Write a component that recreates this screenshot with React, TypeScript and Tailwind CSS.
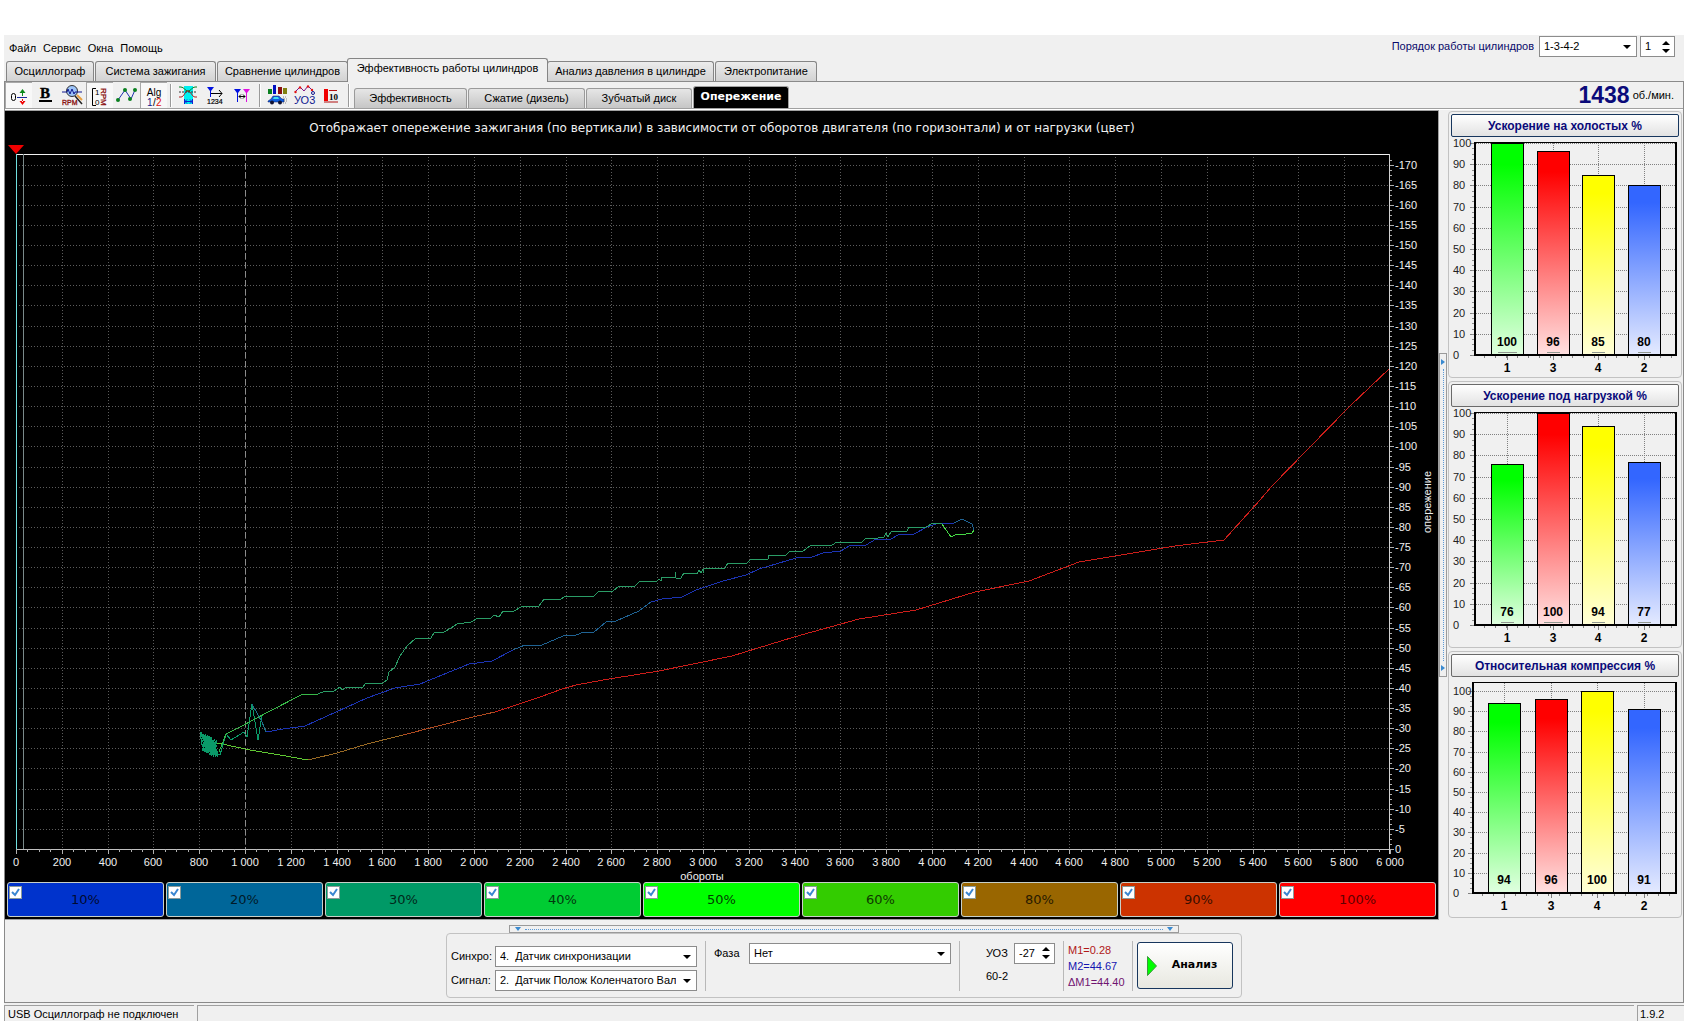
import React from "react";

type Pt = [number, number];
type Line = { color: string; pts: Pt[] };

const ui = "font-['Liberation_Sans',Arial,sans-serif]";
const wide = "font-['DejaVu_Sans',Verdana,sans-serif]";

const range = (n: number) => Array.from({ length: n }, (_, i) => i);
const toPoints = (pts: Pt[]) => pts.map((p) => p.join(",")).join(" ");

/* ---------- toolbar icons ---------- */

const iconOffset = () => (
  <svg viewBox="0 0 22 22" className="size-[22px]">
    <rect x="3.5" y="8.5" width="4" height="7" rx="2" fill="none" stroke="#000" />
    <path d="M9 12.500h10" stroke="#1a2a9a" />
    <path d="M14.500 4l3 4h-6zM14 8h1v3h-1z" fill="#0a8a1a" />
    <path d="M14.500 20l3-4h-6zM14 14h1v3h-1z" fill="#f00000" />
  </svg>
);
const iconBold = () => (
  <svg viewBox="0 0 22 22" className="size-[22px]">
    <text x="10" y="14" textAnchor="middle" fontSize="15" fontWeight="700" stroke="#000" strokeWidth="0.4" fontFamily="Liberation Serif, serif">B</text>
    <path d="M4 16h13v2H4z" fill="#000" />
  </svg>
);
const iconZoomRpm = () => (
  <svg viewBox="0 0 22 22" className="size-[22px]">
    <circle cx="10" cy="7" r="5.500" fill="#9cc4f8" stroke="#333" />
    <path d="M0 8h5l1-3 2 5 2-5 2 5 1-2h7" stroke="#101a90" fill="none" />
    <path d="M15 11l5 5" stroke="#e8a040" strokeWidth="2" />
    <path d="M13 12l7 8" stroke="#222" strokeWidth="1.500" />
    <text x="0" y="21" fontSize="7" fontFamily="Liberation Sans" fill="#8a1010" stroke="#8a1010" strokeWidth="0.3">RPM</text>
  </svg>
);
const iconScale = () => (
  <svg viewBox="0 0 22 22" className="size-[22px]">
    <path d="M7 3.500H3.500v17H7" fill="none" stroke="#000" />
    <text x="6" y="10" fontSize="8" fontFamily="Liberation Sans">1</text>
    <text x="6" y="20" fontSize="8" fontFamily="Liberation Sans">0</text>
    <text transform="translate(12 3) rotate(90)" fontSize="8" fontFamily="Liberation Sans" fill="#8a1010" stroke="#8a1010" strokeWidth="0.3">RPM</text>
  </svg>
);
const iconPoints = () => (
  <svg viewBox="0 0 22 22" className="size-[22px]">
    <path d="M2 16L9 6l6 9 4-9" fill="none" stroke="#2030b0" />
    <g fill="#0a8020">
      <circle cx="2" cy="16" r="2" />
      <circle cx="9" cy="6" r="2" />
      <circle cx="14" cy="15" r="2" />
      <circle cx="19" cy="6" r="2" />
    </g>
  </svg>
);
const iconAlg = () => (
  <svg viewBox="0 0 22 22" className="size-[22px]">
    <text x="11" y="11" textAnchor="middle" fontSize="10" fontFamily="Liberation Sans">Alg</text>
    <text x="4" y="21" fontSize="10" fontFamily="Liberation Sans" fill="#101a90">1</text>
    <text x="10" y="21" fontSize="10" fontFamily="Liberation Sans">/</text>
    <text x="13" y="21" fontSize="10" fontFamily="Liberation Sans" fill="#e01010">2</text>
  </svg>
);
const iconWindow = () => (
  <svg viewBox="0 0 22 22" className="size-[22px]">
    <path d="M6 2h9v18H6z" fill="#00f0f0" />
    <path d="M1 3h2c3 0 4 4 7 4s4-4 7-4h2" fill="none" stroke="#0a8020" />
    <path d="M1 13h2c3 0 4-6 7-6s4 6 7 6h2" fill="none" stroke="#b02020" />
    <path d="M1 8h18" stroke="#333" strokeDasharray="2 1" />
    <path d="M6.500 15v5M14.500 15v5M7 17.500h7M9 15.500l-2 2 2 2M12 15.500l2 2-2 2" fill="none" stroke="#1020d0" />
  </svg>
);
const iconOrder = () => (
  <svg viewBox="0 0 22 22" className="size-[22px]">
    <path d="M2 3h7L6 7v6H5V7z" fill="#0010e0" />
    <path d="M6 9.500h11M14 6l3 3.500-3 3.500" fill="none" stroke="#000" />
    <text x="2" y="20" fontSize="7" fontFamily="Liberation Sans" stroke="#000" strokeWidth="0.2">1234</text>
  </svg>
);
const iconMarkers = () => (
  <svg viewBox="0 0 22 22" className="size-[22px]">
    <path d="M2 5h7L6 9v9H5V9z" fill="#0010e0" />
    <path d="M11 5h7l-3 4v9h-1V9z" fill="#e010e0" />
    <path d="M7 12.500h6M9 10.500l-2 2 2 2M11 10.500l2 2-2 2" fill="none" stroke="#000" />
  </svg>
);
const iconCar = () => (
  <svg viewBox="0 0 22 22" className="size-[22px]">
    <path d="M1 5h4v5H1z" fill="#0a8020" />
    <path d="M6 1h3v9H6z" fill="#0010c0" />
    <path d="M11 3h4v7h-4z" fill="#8a1010" />
    <path d="M16 4h4v6h-4z" fill="#808010" />
    <path d="M1 17l3-2 2-3h6l3 3h2v3H1z" fill="#1060e0" stroke="#101a60" strokeWidth="0.500" />
    <path d="M6 15l1-2h4l1 2z" fill="#40e0f0" />
    <circle cx="5" cy="18.500" r="2" fill="#101030" />
    <circle cx="13" cy="18.500" r="2" fill="#101030" />
    <path d="M16 13h4M17 15h4M17 17h3M16 19h4" stroke="#888" strokeDasharray="1 1" />
  </svg>
);
const iconUoz = () => (
  <svg viewBox="0 0 22 22" className="size-[22px]">
    <path d="M1 8l5-5 4 4 4-5 4 4" fill="none" stroke="#801080" />
    <g fill="#e01010">
      <circle cx="1.500" cy="8" r="1.200" />
      <circle cx="6" cy="3.500" r="1.200" />
      <circle cx="14" cy="2.500" r="1.200" />
      <circle cx="18" cy="6" r="1.200" />
    </g>
    <text x="0" y="20" fontSize="11" fontFamily="Liberation Sans" fill="#101a90">УО3</text>
    <circle cx="19" cy="9" r="1.500" fill="none" stroke="#101a90" />
  </svg>
);
const iconTen = () => (
  <svg viewBox="0 0 22 22" className="size-[22px]">
    <path d="M3 5h4v12H3z" fill="#f00000" />
    <path d="M8 6.500h8M3 18h14" stroke="#b01010" />
    <text x="8" y="16" fontSize="9" fontWeight="700" fontFamily="Liberation Serif, serif">10</text>
  </svg>
);

type Tool = { label: string; icon: () => React.JSX.Element; pressed?: boolean };
const toolGroups: Tool[][] = [
  [
    { label: "Смещение", icon: iconOffset, pressed: true },
    { label: "Жирные линии", icon: iconBold },
    { label: "Масштаб RPM", icon: iconZoomRpm },
    { label: "Шкала RPM", icon: iconScale, pressed: true },
    { label: "Точки", icon: iconPoints },
    { label: "Алгоритм", icon: iconAlg, pressed: true },
  ],
  [
    { label: "Окно", icon: iconWindow },
    { label: "Порядок", icon: iconOrder },
    { label: "Маркеры", icon: iconMarkers },
  ],
  [
    { label: "Автомобиль", icon: iconCar },
    { label: "УОЗ", icon: iconUoz },
    { label: "Десять", icon: iconTen },
  ],
];

/* ---------- main chart ---------- */

const X0 = 16;
const X1 = 1390;
const Y0 = 849;
const YTOP = 154;
const px = (rpm: number) => Math.round(X0 + (rpm * (X1 - X0)) / 6000);
const py = (deg: number) => Math.round(Y0 - deg * 4.026);

const idleNoise: Pt[] = range(90).map((i) => {
  const x = 201 + ((i * 7) % 18);
  const mid = 741 + (x - 201) * 0.5;
  const amp = 3 + ((i * 5) % 7);
  return [x, Math.round(mid + (i % 2 ? amp : -amp))];
});

const lines: Line[] = [
  { color: "#5fc832", pts: [[210, 742], [222, 744], [250, 750], [280, 755], [308, 760]] },
  { color: "#9a6a24", pts: [[308, 760], [337, 753], [367, 744], [403, 735]] },
  { color: "#b04a20", pts: [[403, 735], [473, 717], [495, 712]] },
  {
    color: "#cc1e1a",
    pts: [
      [495, 712], [540, 697], [562, 689], [576, 685], [609, 679], [659, 671], [732, 656], [794, 637], [859, 619],
      [916, 610], [975, 592], [1029, 581], [1079, 562], [1127, 554], [1175, 546], [1224, 540], [1260, 500],
      [1271, 487], [1308, 449], [1350, 406], [1389, 369],
    ],
  },
  { color: "#0a9a68", pts: [[200, 732], [202, 745], ...idleNoise, [220, 755], [226, 734], [231, 740], [244, 732], [247, 737], [252, 704], [258, 740], [262, 715]] },
  { color: "#1d7088", pts: [[252, 704], [258, 715], [262, 722], [266, 732]] },
  {
    color: "#1c34b4",
    pts: [[266, 732], [283, 729], [305, 726], [367, 698], [395, 688], [420, 684], [469, 664], [492, 661], [513, 650]],
  },
  {
    color: "#1f6394",
    pts: [
      [513, 650], [525, 645], [542, 645], [563, 636], [576, 635], [584, 632], [594, 632], [606, 622], [616, 621],
      [639, 611], [651, 602],
    ],
  },
  {
    color: "#1c34b4",
    pts: [
      [651, 602], [662, 599], [682, 597], [696, 590], [723, 581], [746, 575], [759, 569], [796, 558], [812, 557],
      [823, 553], [841, 551], [849, 546], [866, 545], [876, 539], [891, 539], [900, 534], [914, 534], [927, 527],
      [939, 523], [954, 523],
    ],
  },
  { color: "#1f6394", pts: [[954, 523], [962, 519], [972, 524], [974, 530]] },
  { color: "#46d846", pts: [[974, 530], [972, 533], [966, 534], [955, 535], [951, 537], [942, 524]] },
  { color: "#38b848", pts: [[219, 752], [226, 734], [240, 727], [268, 712], [303, 694], [318, 694]] },
  {
    color: "#2a9c66",
    pts: [
      [318, 694], [325, 691], [334, 691], [340, 687], [342, 690], [347, 687], [363, 687], [366, 683], [383, 683],
      [387, 680], [389, 672], [395, 667], [400, 656], [407, 646], [415, 639], [431, 638], [434, 633], [444, 632],
      [451, 628], [457, 624], [471, 622], [478, 618], [491, 618], [494, 615], [499, 617], [503, 611], [514, 611],
      [523, 606], [539, 606], [544, 599], [559, 600], [566, 596], [594, 596], [599, 591], [613, 591], [619, 586],
      [625, 587], [630, 586], [634, 587], [640, 581], [657, 581], [659, 579], [661, 581], [662, 577], [675, 577],
      [675, 572], [676, 578], [681, 578], [684, 573], [697, 574], [699, 570], [701, 573], [703, 569], [703, 573],
      [704, 569], [725, 568], [728, 563], [730, 564], [747, 563], [750, 560], [768, 559], [769, 555], [786, 555],
      [789, 552], [803, 551], [810, 546], [832, 545], [837, 542], [862, 542], [866, 538], [873, 539], [884, 537],
      [886, 533], [888, 537], [891, 532], [907, 531], [909, 527], [926, 527], [933, 523], [942, 524],
    ],
  },
];

function groupThousands(n: number) {
  return n < 1000 ? String(n) : `${Math.floor(n / 1000)} ${String(n % 1000).padStart(3, "0")}`;
}

function AdvanceChart() {
  return (
    <svg
      viewBox="5 111 1433 771"
      className="block min-h-0 w-full flex-1"
      role="img"
      aria-label="Опережение зажигания от оборотов двигателя"
      fontFamily="Liberation Sans, Arial, sans-serif"
      fontSize="11"
      fill="#f0f0f0"
    >
      <text x="722" y="132" textAnchor="middle" fontSize="12" fontFamily="DejaVu Sans, Verdana, sans-serif">
        Отображает опережение зажигания (по вертикали) в зависимости от оборотов двигателя (по горизонтали) и от нагрузки (цвет)
      </text>
      <path d="M8 145h16l-8 9z" fill="#f00000" />
      <g shapeRendering="crispEdges" fill="none">
        {range(34).map((i) => (
          <path key={i} d={`M${X0} ${py((i + 1) * 5)}.5H${X1}`} stroke="#5c5c5c" strokeDasharray="1 2" />
        ))}
        {range(29).map((i) => (
          <path key={i} d={`M${px((i + 1) * 200)}.5 ${YTOP}V${Y0}`} stroke="#5c5c5c" strokeDasharray="1 2" />
        ))}
        <path d={`M${px(1000)}.5 ${YTOP}V${Y0}`} stroke="#8c8c8c" strokeDasharray="6 3" />
        <path d={`M${X0} ${YTOP}.5H${X1}`} stroke="#f0f0f0" />
        <path d={`M${X0} ${Y0}.5H${X1}`} stroke="#c0c0c0" />
        <path d={`M${X1 - 1}.5 ${YTOP}V${Y0 + 5}`} stroke="#d0d0d0" />
        <path d={`M16.5 ${YTOP}V${Y0}`} stroke="#70e0e0" />
        <path d={`M23.5 ${YTOP}V${Y0}`} stroke="#7a8a8a" />
        {range(121).map((i) => (
          <path key={i} d={`M${px(i * 50)}.5 ${Y0}v${i % 4 ? 3 : 5}`} stroke="#b0b0b0" />
        ))}
        {range(138).map((i) => (
          <path key={i} d={`M${X1} ${py(i * 1.25)}.5h${i % 4 ? 2 : 4}`} stroke="#b0b0b0" />
        ))}
      </g>
      {range(31).map((i) => (
        <text key={i} x={px(i * 200)} y="866" textAnchor="middle">
          {groupThousands(i * 200)}
        </text>
      ))}
      {range(35).map((i) => (
        <text key={i} x="1395" y={py(i * 5) + 4}>
          {i ? `-${i * 5}` : "0"}
        </text>
      ))}
      <text x="702" y="880" textAnchor="middle">обороты</text>
      <text transform="translate(1431 502) rotate(-90)" textAnchor="middle">опережение</text>
      <g fill="none" shapeRendering="crispEdges">
        {lines.map((l, i) => (
          <polyline key={i} points={toPoints(l.pts)} stroke={l.color} strokeLinejoin="round" />
        ))}
      </g>
    </svg>
  );
}

/* ---------- load legend ---------- */

const loads = [
  { label: "10%", bg: "bg-[#0033cc]", text: "text-[#000a30]" },
  { label: "20%", bg: "bg-[#006699]", text: "text-[#001a28]" },
  { label: "30%", bg: "bg-[#009966]", text: "text-[#00281a]" },
  { label: "40%", bg: "bg-[#00cc33]", text: "text-[#00380e]" },
  { label: "50%", bg: "bg-[#00ff00]", text: "text-[#004000]" },
  { label: "60%", bg: "bg-[#33cc00]", text: "text-[#0e3800]" },
  { label: "80%", bg: "bg-[#996600]", text: "text-[#281a00]" },
  { label: "90%", bg: "bg-[#cc3300]", text: "text-[#380e00]" },
  { label: "100%", bg: "bg-[#ff0000]", text: "text-[#600000]" },
];

function LoadCell({ label, bg, text }: { label: string; bg: string; text: string }) {
  return (
    <label className={`relative flex h-[35px] flex-1 items-center justify-center rounded-[3px] border border-[#c8d0c8] ${bg} ${text} ${wide} text-[13px]`}>
      <input
        type="checkbox"
        defaultChecked
        className="peer absolute top-[3px] left-px size-[13px] appearance-none border border-[#8a9a9a] bg-white"
      />
      <svg viewBox="0 0 13 13" className="pointer-events-none absolute top-[3px] left-px hidden size-[13px] peer-checked:block">
        <path d="M3 6l3 3 4-6" fill="none" stroke="#3a86d0" strokeWidth="2" />
      </svg>
      <span>{label}</span>
    </label>
  );
}

/* ---------- right-hand bar charts ---------- */

type BarPanel = {
  title: string;
  values: number[];
  focus?: boolean;
  baseMarks: boolean;
  left: number;
  bottom: number;
  step: number;
  centers: number[];
};

const barPanels: BarPanel[] = [
  { title: "Ускорение на холостых %", values: [100, 96, 85, 80], focus: true, baseMarks: true, left: 23, bottom: 217, step: 212, centers: [56, 102, 147, 193] },
  { title: "Ускорение под нагрузкой %", values: [76, 100, 94, 77], baseMarks: true, left: 23, bottom: 217, step: 212, centers: [56, 102, 147, 193] },
  { title: "Относительная компрессия %", values: [94, 96, 100, 91], baseMarks: false, left: 21, bottom: 215, step: 202, centers: [53, 100, 146, 193] },
];
const barNames = ["1", "3", "4", "2"];
const barColors = [
  ["#00ff00", "#e0ffe0"],
  ["#ff0000", "#ffe0e0"],
  ["#ffff00", "#ffffd8"],
  ["#3366ff", "#e4eaff"],
];

function BarChart({ panel, id }: { panel: BarPanel; id: number }) {
  const { left, bottom, step, centers, values, baseMarks } = panel;
  const yOf = (v: number) => Math.round(bottom - (v * step) / 100);
  return (
    <svg viewBox="0 -1 228 238" className="block w-full" role="img" aria-label={panel.title} fontFamily="Liberation Sans, Arial, sans-serif">
      <defs>
        {barColors.map(([a, b], i) => (
          <linearGradient key={i} id={`bar-${id}-${i}`} x1="0" y1="0" x2="0" y2="1">
            <stop offset="0.1" stopColor={a} />
            <stop offset="1" stopColor={b} />
          </linearGradient>
        ))}
      </defs>
      <g shapeRendering="crispEdges" fill="none">
        {range(11).map((i) => (
          <g key={i}>
            <path d={`M${left} ${yOf(i * 10)}.5H225`} stroke="#808080" strokeDasharray="1 1" />
            <path d={`M${left - 4} ${yOf(i * 10)}.5h4`} stroke="#808080" />
          </g>
        ))}
        {range(41).map((i) => (
          <path key={i} d={`M${left - 2} ${yOf(i * 2.5)}.5h2`} stroke="#909090" />
        ))}
        {centers.map((c) => (
          <path key={c} d={`M${c}.5 5V${bottom}`} stroke="#808080" strokeDasharray="1 1" />
        ))}
        {range(18).map((i) => (
          <path key={i} d={`M${left + 10 + i * 11}.5 ${bottom}v3`} stroke="#808080" />
        ))}
        {centers.map((c) => (
          <path key={c} d={`M${c}.5 ${bottom}v5`} stroke="#808080" />
        ))}
      </g>
      {range(11).map((i) => (
        <text key={i} x="2" y={yOf(i * 10) + 4} fontSize="11" fill="#222">
          {i * 10}
        </text>
      ))}
      <g shapeRendering="crispEdges">
        <path d={`M${left} 4.5H226`} stroke="#000" />
        <path d={`M${left}.5 4V${bottom + 1}M225 4V${bottom + 1}`} stroke="#000" strokeWidth="2" />
        <path d={`M${left} ${bottom}H226`} stroke="#000" strokeWidth="2" />
        {values.map((v, i) => (
          <rect
            key={i}
            x={centers[i] - 16 + 0.5}
            y={yOf(v) + 0.5}
            width="32"
            height={bottom - yOf(v) - 1}
            fill={`url(#bar-${id}-${i})`}
            stroke="#000"
          />
        ))}
      </g>
      {values.map((v, i) => (
        <g key={i} textAnchor="middle" fontSize="12" fontWeight="700" fill="#000">
          <text x={centers[i]} y={bottom - 9}>{v}</text>
          {baseMarks && <path d={`M${centers[i] - (v === 100 ? 9 : 6)} ${bottom - 3}.5h${v === 100 ? 19 : 13}`} stroke="#909890" />}
          <text x={centers[i]} y={bottom + 17}>{barNames[i]}</text>
        </g>
      ))}
    </svg>
  );
}

function BarCard({ panel, id }: { panel: BarPanel; id: number }) {
  return (
    <section className="rounded-[4px] border border-[#c2c2c2] p-0.5">
      <button
        type="button"
        className={`flex h-[23px] w-full items-center justify-center rounded-[2px] border bg-gradient-to-b from-white to-[#e2e2e2] text-[12px] font-bold text-[#0a0a7a] ${
          panel.focus ? "border-[#17365d]" : "border-[#6a6a6a]"
        }`}
      >
        {panel.title}
      </button>
      <BarChart panel={panel} id={id} />
    </section>
  );
}

/* ---------- small controls ---------- */

function Combo({ label, labelClass, options, className }: { label: string; labelClass: string; options: string[]; className: string }) {
  return (
    <label className="flex items-center">
      <span className={labelClass}>{label}</span>
      <span className={`relative block ${className}`}>
        <select className="block h-[21px] w-full appearance-none overflow-hidden border border-[#8c8c8c] bg-white pr-5 pl-1 text-[11px] text-black">
          {options.map((o) => (
            <option key={o}>{o}</option>
          ))}
        </select>
        <svg viewBox="0 0 8 4" className="pointer-events-none absolute top-[9px] right-1.5 h-1 w-2">
          <path d="M0 0h8L4 4z" fill="#000" />
        </svg>
      </span>
    </label>
  );
}

function Spinner({ label, value, className }: { label: string; value: string; className: string }) {
  return (
    <span className={`flex h-[21px] items-center border border-[#8c8c8c] bg-white ${className}`}>
      <input aria-label={label} defaultValue={value} className="w-0 flex-1 bg-transparent pl-1 text-[11px] outline-none" />
      <span className="flex flex-col gap-1 pr-1">
        <button type="button" aria-label={`${label}: больше`} className="block">
          <svg viewBox="0 0 8 4" className="block h-1 w-2"><path d="M0 4h8L4 0z" /></svg>
        </button>
        <button type="button" aria-label={`${label}: меньше`} className="block">
          <svg viewBox="0 0 8 4" className="block h-1 w-2"><path d="M0 0h8L4 4z" /></svg>
        </button>
      </span>
    </span>
  );
}

const Divider = () => <span className="w-px self-stretch bg-[#b8b8b8]" />;

/* ---------- page ---------- */

const mainTabs = [
  { label: "Осциллограф", width: "w-[88px]" },
  { label: "Система зажигания", width: "w-[121px]" },
  { label: "Сравнение цилиндров", width: "w-[131px]" },
  { label: "Эффективность работы цилиндров", width: "w-[201px]", active: true },
  { label: "Анализ давления в цилиндре", width: "w-[167px]" },
  { label: "Электропитание", width: "w-[102px]" },
];
const subTabs = [
  { label: "Эффективность", width: "w-[113px]" },
  { label: "Сжатие (дизель)", width: "w-[117px]" },
  { label: "Зубчатый диск", width: "w-[106px]" },
  { label: "Опережение", width: "w-[96px]", active: true },
];

export default function App() {
  return (
    <div className={`flex min-h-screen flex-col bg-white pt-[35px] pr-3 pb-[5px] pl-1 text-black ${ui}`}>
      <div className="flex flex-1 flex-col bg-[#f0f0f0] text-[11px]">
        <header className="flex h-[46px] justify-between">
          <div className="flex flex-col justify-between">
            <nav className="flex gap-[7px] pt-[5px] pl-[5px] text-[11px] leading-4">
              {["Файл", "Сервис", "Окна", "Помощь"].map((m) => (
                <button type="button" key={m}>{m}</button>
              ))}
            </nav>
            <div role="tablist" className="flex items-end gap-px pl-0.5">
              {mainTabs.map((t) => (
                <button
                  type="button"
                  role="tab"
                  aria-selected={!!t.active}
                  key={t.label}
                  className={`${t.width} rounded-t-[3px] border border-b-0 border-[#858585] text-center whitespace-nowrap ${
                    t.active ? "relative -mx-0.5 -mb-px h-6 bg-[#f0f0f0] pb-1" : "h-5 bg-gradient-to-b from-[#ececec] to-[#d2d2d2]"
                  }`}
                >
                  {t.label}
                </button>
              ))}
            </div>
          </div>
          <div className="flex items-start gap-[3px] pt-px pr-[9px]">
            <Combo label="Порядок работы цилиндров" labelClass="mr-[5px] text-[#0a0a6a]" options={["1-3-4-2"]} className="w-[98px]" />
            <Spinner label="Номер цилиндра" value="1" className="w-[35px]" />
          </div>
        </header>

        <main className="flex flex-1 flex-col border border-[#8a8a8a]">
          <div className="flex h-[27px] items-stretch border-b border-[#a0a0a0]">
            {toolGroups.map((group, g) => (
              <div key={g} className="flex items-center">
                {group.map(({ label, icon: Icon, pressed }) => (
                  <button
                    type="button"
                    key={label}
                    aria-label={label}
                    aria-pressed={!!pressed}
                    className={`flex h-[26px] w-[27px] items-center justify-center ${
                      pressed ? "border-t border-l border-[#a8a8a8] bg-[#f8f8f8]" : ""
                    }`}
                  >
                    <Icon />
                  </button>
                ))}
                <span className="mx-[3px] h-[23px] w-0.5 border-l border-[#9a9a9a] bg-white" />
              </div>
            ))}
            <div role="tablist" className="flex items-end gap-px pl-px">
              {subTabs.map((t) => (
                <button
                  type="button"
                  role="tab"
                  aria-selected={!!t.active}
                  key={t.label}
                  className={`${t.width} rounded-t-[3px] border border-b-0 text-center whitespace-nowrap ${
                    t.active
                      ? `h-[22px] border-[#a0a0a0] bg-black ${wide} font-bold text-white`
                      : "h-5 border-[#9a9a9a] bg-gradient-to-b from-[#e6e6e6] to-[#c6c6c6]"
                  }`}
                >
                  {t.label}
                </button>
              ))}
            </div>
            <div className="ml-auto flex items-center gap-[3px] pr-[9px]">
              <span className="text-[23px] leading-6 font-bold text-[#0a0a7a]">1438</span>
              <span>об./мин.</span>
            </div>
          </div>

          <div className="flex border-t border-white">
            <div className="flex min-w-0 flex-1 flex-col border-t border-r border-b border-[#a0a0a0] bg-black">
              <AdvanceChart />
              <div className="flex gap-0.5 px-0.5 pb-0.5">
                {loads.map((l) => (
                  <LoadCell key={l.label} {...l} />
                ))}
              </div>
            </div>
            <div className="flex w-[9px] flex-col justify-center">
              <div className="flex h-[324px] w-2 flex-col items-center justify-between border border-[#9a9a9a] py-[5px]">
                <svg viewBox="0 0 4 6" className="h-1.5 w-1"><path d="M0 0l4 3-4 3z" fill="#3a8ad0" /></svg>
                <span className="my-1 w-0 flex-1 border-l border-dotted border-[#5a9ad8]" />
                <svg viewBox="0 0 4 6" className="h-1.5 w-1"><path d="M0 0l4 3-4 3z" fill="#3a8ad0" /></svg>
              </div>
            </div>
            <aside className="flex w-[235px] flex-col gap-[3px] pt-px pr-px pb-0.5">
              {barPanels.map((p, i) => (
                <BarCard key={p.title} panel={p} id={i} />
              ))}
            </aside>
          </div>

          <div className="flex flex-1 flex-col items-center pt-[5px]">
            <div className="flex h-2 w-[670px] items-center justify-between border border-[#9a9a9a] px-[5px]">
              <svg viewBox="0 0 6 4" className="h-1 w-1.5"><path d="M0 0h6L3 4z" fill="#3a8ad0" /></svg>
              <span className="mx-1 h-0 flex-1 border-t border-dotted border-[#5a9ad8]" />
              <svg viewBox="0 0 6 4" className="h-1 w-1.5"><path d="M0 0h6L3 4z" fill="#3a8ad0" /></svg>
            </div>
            <div className="flex h-[65px] items-center rounded-[4px] border border-[#c2c2c2] pr-2 pl-1">
              <div className="flex h-[50px] items-stretch">
                <div className="flex flex-col justify-end gap-[3px]">
                  <Combo label="Синхро:" labelClass="w-11" options={["4.\u00a0\u00a0Датчик синхронизации"]} className="w-[202px]" />
                  <Combo label="Сигнал:" labelClass="w-11" options={["2.\u00a0\u00a0Датчик Полож Коленчатого Вала"]} className="w-[202px]" />
                </div>
                <span className="w-2" />
                <Divider />
                <div className="flex items-start px-2 pt-0.5">
                  <Combo label="Фаза" labelClass="w-[35px]" options={["Нет"]} className="w-[202px]" />
                </div>
                <Divider />
                <div className="flex w-[103px] flex-col justify-start gap-1 pt-0.5 pl-[26px]">
                  <div className="flex items-center justify-between pr-2">
                    <span>УОЗ</span>
                    <Spinner label="УОЗ" value="-27" className="w-[41px]" />
                  </div>
                  <span className="leading-4">60-2</span>
                </div>
                <Divider />
                <div className="flex w-[68px] flex-col justify-center pl-1 leading-4 whitespace-nowrap">
                  <span className="text-[#b01818]">M1=0.28</span>
                  <span className="text-[#1414b0]">M2=44.67</span>
                  <span className="text-[#701470]">ΔM1=44.40</span>
                </div>
                <Divider />
              </div>
              <button
                type="button"
                className={`ml-1 flex h-[47px] w-24 items-center rounded-[3px] border border-[#17365d] bg-gradient-to-b from-white to-[#e8e8e0] pl-[9px] font-bold ${wide}`}
              >
                <svg viewBox="0 0 10 20" className="h-5 w-2.5"><path d="M0.500 0.500l9 9.500-9 9.500z" fill="#00ff00" stroke="#3a9a3a" /></svg>
                <span className="flex-1 text-center">Анализ</span>
              </button>
            </div>
          </div>
        </main>

        <footer className="mt-0.5 flex h-4 gap-[3px] leading-4">
          <span className="w-[190px] border-t border-l border-[#a0a0a0] pl-[3px]">USB Осциллограф не подключен</span>
          <span className="flex-1 border-t border-l border-[#a0a0a0]" />
          <span className="w-[47px] border-t border-l border-[#a0a0a0] pl-0.5">1.9.2</span>
        </footer>
      </div>
    </div>
  );
}
